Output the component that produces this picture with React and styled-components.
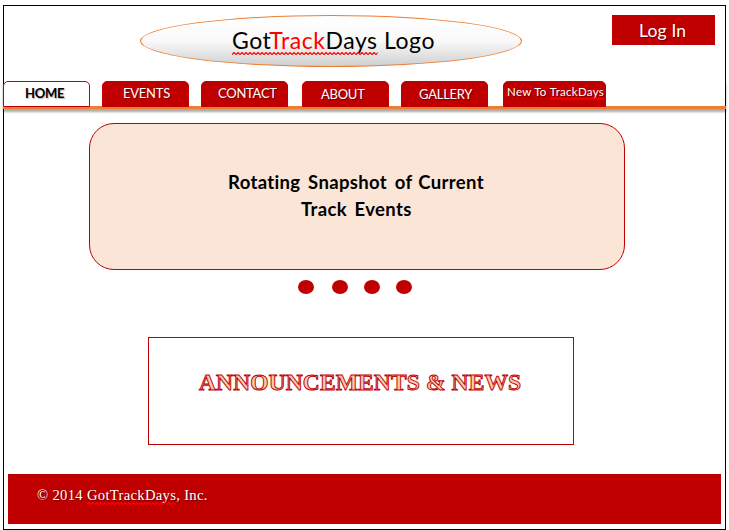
import React from 'react';
import styled, { createGlobalStyle } from 'styled-components';

const RED = '#c00000';
const ORANGE = '#ed7d31';

const GlobalStyle = createGlobalStyle`
  * { box-sizing: border-box; }
  body { margin: 0; background: #fff; overflow: hidden; }
`;

const Frame = styled.div`
  width: 723px;
  height: 525px;
  margin: 5px 0 0 3px;
  border: 1px solid #000;
  background: #fff;
  font-family: Lato, "Liberation Sans", sans-serif;
  font-variant-ligatures: none;
  display: flex;
  flex-direction: column;
`;

const Header = styled.header`
  height: 75px;
  flex: none;
  display: flex;
  align-items: flex-start;
  padding: 9px 10px 0 136px;
  justify-content: space-between;
`;

const Logo = styled.div`
  width: 382px;
  height: 52px;
  border: 1px solid ${ORANGE};
  border-radius: 50%;
  background: linear-gradient(#fff 0%, #f9f9f9 50%, #e4e4e4 76%, #cfcfcf 100%);
  padding: 8px 0 0 91px;
  font-size: 23px;
  line-height: 32px;
  letter-spacing: 0.55px;
  white-space: nowrap;
  color: #000;
`;

const Accent = styled.span`
  color: #f00;
`;

const Misspelt = styled.span`
  position: relative;
  display: inline-block;
`;

const Wave = styled.svg`
  position: absolute;
  left: 0;
  top: ${(p) => p.$top}px;
  width: 100%;
  height: 3px;
`;

const LoginButton = styled.button`
  width: 103px;
  height: 30px;
  border: 0;
  padding: 1px 0 0 27px;
  background: ${RED};
  color: #fff;
  font: 400 17.5px/30px Lato, sans-serif;
  letter-spacing: 0.15px;
  text-align: left;
  white-space: nowrap;
  text-shadow: 1px 1px 1px rgba(0, 0, 0, 0.45);
`;

const Nav = styled.nav`
  display: flex;
  flex: none;
  height: 28px;
  margin: 0 -1px;
  border-bottom: 3px solid ${ORANGE};
  box-shadow: 0 3px 2px rgba(0, 0, 0, 0.33);
`;

const Tab = styled.a`
  width: ${(p) => p.$width || 87}px;
  height: 26px;
  flex: none;
  margin-left: ${(p) => p.$gap}px;
  padding: ${(p) => p.$top}px 0 0 ${(p) => p.$indent}px;
  border: 1px solid ${RED};
  border-radius: 5px 5px 0 0;
  background: ${(p) => (p.$active ? '#fff' : RED)};
  color: ${(p) => (p.$active ? '#000' : '#fff')};
  font-size: ${(p) => p.$size || 13}px;
  font-weight: ${(p) => (p.$active ? 700 : 400)};
  line-height: 16px;
  letter-spacing: ${(p) => p.$spacing ?? -0.25}px;
  white-space: nowrap;
  text-shadow: 1px 1px 1px rgba(0, 0, 0, ${(p) => (p.$active ? 0.3 : 0.45)});
`;

const Carousel = styled.section`
  width: 536px;
  height: 147px;
  flex: none;
  margin: 14px 0 0 85px;
  padding-top: 45px;
  border: 1px solid ${RED};
  border-radius: 25px;
  background: #fbe5d6;
  display: flex;
  flex-direction: column;
`;

const Headline = styled.div`
  margin-left: ${(p) => p.$indent}px;
  font-size: 18.5px;
  font-weight: 700;
  line-height: 27px;
  letter-spacing: 0.35px;
  word-spacing: 2.8px;
  white-space: nowrap;
  color: #000;
`;

const Tight = styled.span`
  word-spacing: 1px;
`;

const Dots = styled.div`
  display: flex;
  flex: none;
  margin: 10px 0 0 294px;
`;

const Dot = styled.span`
  width: 16px;
  height: 14px;
  margin-right: ${(p) => p.$gap}px;
  border-radius: 50%;
  background: ${RED};
`;

const News = styled.section`
  width: 426px;
  height: 108px;
  flex: none;
  margin: 43px 0 0 144px;
  padding: 29px 0 0 50px;
  border: 1px solid ${RED};
`;

const NewsTitle = styled.h2`
  margin: 0;
  font: 700 23.5px/30px "Liberation Serif", serif;
  letter-spacing: 0.12px;
  white-space: nowrap;
  color: #f8cbad;
  -webkit-text-stroke: 0.95px ${RED};
`;

const Footer = styled.footer`
  width: 713px;
  height: 50px;
  flex: none;
  margin: 29px 0 0 4px;
  padding: 11px 0 0 29px;
  background: ${RED};
  color: #fff;
  font: 400 14.67px/20px "Liberation Serif", serif;
  letter-spacing: 0.3px;
  white-space: nowrap;
  text-shadow: 1px 1px 1px rgba(0, 0, 0, 0.5);
`;

function Squiggle({ id, top }) {
  return (
    <Wave $top={top} aria-hidden="true">
      <defs>
        <pattern id={id} width="4" height="3" patternUnits="userSpaceOnUse">
          <path d="M-1 1.5 L0 2.5 L2 0.5 L4 2.5 L5 1.5" fill="none" stroke="#f00" strokeWidth="1.2" />
        </pattern>
      </defs>
      <rect width="100%" height="3" fill={`url(#${id})`} />
    </Wave>
  );
}

export default function App() {
  return (
    <>
      <GlobalStyle />
      <Frame>
        <Header>
          <Logo>
            <Misspelt>
              Got<Accent>Track</Accent>Days
              <Squiggle id="wave-logo" top={28} />
            </Misspelt>{' '}
            Logo
          </Logo>
          <LoginButton>Log In</LoginButton>
        </Header>
        <Nav>
          <Tab $active $gap={0} $indent={21} $top={3}>HOME</Tab>
          <Tab $gap={12} $indent={20} $top={3}>EVENTS</Tab>
          <Tab $gap={12} $indent={16} $top={3}>CONTACT</Tab>
          <Tab $gap={14} $indent={18} $top={4}>ABOUT</Tab>
          <Tab $gap={12} $indent={17} $top={4}>GALLERY</Tab>
          <Tab $gap={15} $indent={3} $top={2} $width={103} $size={11.5} $spacing={0.28}>
            New To{' '}
            <Misspelt>
              TrackDays
              <Squiggle id="wave-tab" top={13} />
            </Misspelt>
          </Tab>
        </Nav>
        <Carousel>
          <Headline $indent={138}>
            Rotating Snapshot of<Tight> Current</Tight>
          </Headline>
          <Headline $indent={211}>Track Events</Headline>
        </Carousel>
        <Dots>
          <Dot $gap={18} />
          <Dot $gap={16} />
          <Dot $gap={16} />
          <Dot $gap={0} />
        </Dots>
        <News>
          <NewsTitle>ANNOUNCEMENTS &amp; NEWS</NewsTitle>
        </News>
        <Footer>
          © 2014{' '}
          <Misspelt>
            GotTrackDays
            <Squiggle id="wave-footer" top={17} />
          </Misspelt>
          , Inc.
        </Footer>
      </Frame>
    </>
  );
}
